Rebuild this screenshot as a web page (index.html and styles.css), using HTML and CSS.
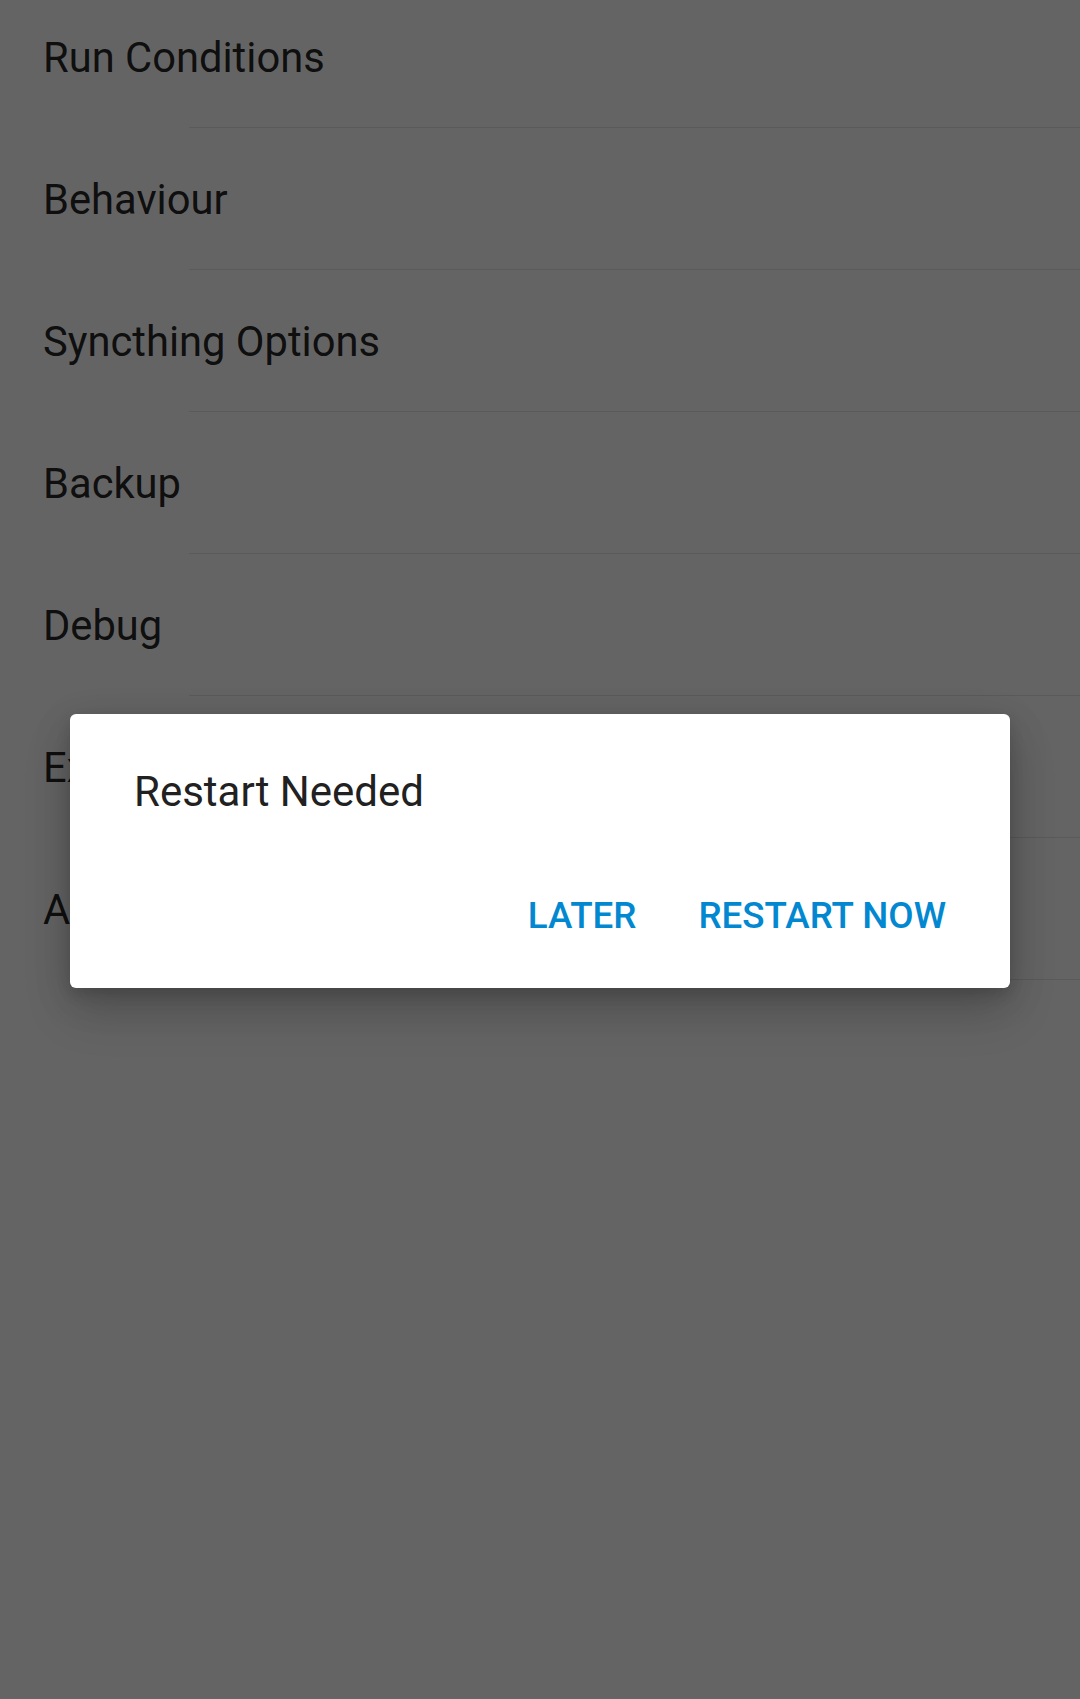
FILE: index.html
```html
<!DOCTYPE html>
<html lang="en">
<head>
<meta charset="utf-8">
<title>Settings</title>
<link rel="stylesheet" href="styles.css">
</head>
<body>
<main class="settings">
  <ul class="pref-list">
    <li class="pref"><span class="pref-label">Run Conditions</span><span class="pref-sep"></span></li>
    <li class="pref"><span class="pref-label">Behaviour</span><span class="pref-sep"></span></li>
    <li class="pref"><span class="pref-label">Syncthing Options</span><span class="pref-sep"></span></li>
    <li class="pref"><span class="pref-label">Backup</span><span class="pref-sep"></span></li>
    <li class="pref"><span class="pref-label">Debug</span><span class="pref-sep"></span></li>
    <li class="pref"><span class="pref-label">Experimental</span><span class="pref-sep"></span></li>
    <li class="pref"><span class="pref-label">About</span><span class="pref-sep"></span></li>
  </ul>
</main>
<div class="scrim"></div>
<div class="dialog" role="dialog" aria-labelledby="dlg-title">
  <h2 class="dialog-title" id="dlg-title">Restart Needed</h2>
  <div class="dialog-actions">
    <button class="btn" type="button">LATER</button>
    <button class="btn" type="button">RESTART NOW</button>
  </div>
</div>
</body>
</html>
```
FILE: styles.css
```css
html, body {
  margin: 0;
  padding: 0;
}
body {
  width: 1080px;
  height: 1699px;
  overflow: hidden;
  background: #fafafa;
  font-family: Roboto, "Noto Sans", "Liberation Sans", sans-serif;
  position: relative;
}
.settings {
  display: block;
}
.pref-list {
  list-style: none;
  margin: -14px 0 0 0;
  padding: 0;
}
.pref {
  height: 142px;
  display: flex;
  flex-direction: column;
}
.pref-label {
  flex: 1;
  display: flex;
  align-items: center;
  padding: 2px 0 0 43px;
  font-size: 41.7px;
  color: rgba(0, 0, 0, 0.87);
}
.pref-sep {
  display: block;
  height: 1px;
  margin-left: 189px;
  background: #e0e0e0;
}
.scrim {
  position: absolute;
  inset: 0;
  background: rgba(0, 0, 0, 0.6);
}
.dialog {
  position: absolute;
  top: 714px;
  left: 70px;
  width: 940px;
  height: 274px;
  box-sizing: border-box;
  background: #ffffff;
  border-radius: 6px;
  box-shadow: 0 24px 48px rgba(0, 0, 0, 0.16), 0 10px 40px rgba(0, 0, 0, 0.12), 0 6px 14px rgba(0, 0, 0, 0.12);
  display: flex;
  flex-direction: column;
  padding: 53px 0 0 0;
}
.dialog-title {
  margin: 0 0 0 64px;
  font-size: 42px;
  font-weight: 400;
  color: #212121;
  line-height: 49px;
}
.dialog-actions {
  display: flex;
  justify-content: flex-end;
  gap: 20px;
  padding: 78px 43px 0 0;
}
.btn {
  font-family: inherit;
  font-size: 36.75px;
  font-weight: 500;
  color: #0288d1;
  background: none;
  border: none;
  padding: 0 21px;
  height: 43px;
  line-height: 43px;
  letter-spacing: 0;
}
```
